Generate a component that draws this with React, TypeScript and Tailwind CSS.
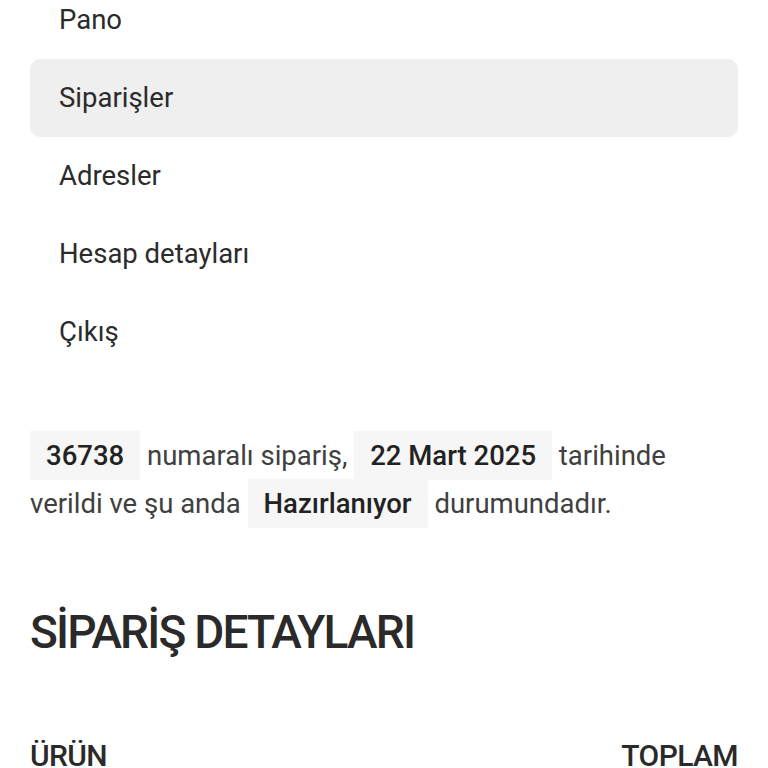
const menu = ["Pano", "Siparişler", "Adresler", "Hesap detayları", "Çıkış"];

function Mark({ children }: { children: React.ReactNode }) {
  return (
    <mark className="bg-[#f6f6f6] text-[#222] font-medium px-4 py-[8px]">{children}</mark>
  );
}

export default function App() {
  return (
    <div
      className="h-[768px] overflow-hidden bg-white text-[#2b2b2b] px-[30px]"
      style={{ fontFamily: "Roboto, 'Liberation Sans', sans-serif" }}
    >
      <nav className="-mt-[19px]">
        <ul>
          {menu.map((item) => (
            <li key={item}>
              <a
                className={
                  "flex items-center h-[78px] pl-[29px] rounded-[10px] text-[27.5px] " +
                  (item === "Siparişler" ? "bg-[#efefef]" : "")
                }
              >
                {item}
              </a>
            </li>
          ))}
        </ul>
      </nav>

      <p className="mt-[61px] text-[27.5px] leading-[48px] text-[#404040]">
        <Mark>36738</Mark> numaralı sipariş, <Mark>22 Mart 2025</Mark> tarihinde verildi ve şu anda{" "}
        <Mark>Hazırlanıyor</Mark> durumundadır.
      </p>

      <h2 className="mt-[74px] text-[46px] leading-[60px] text-[#2a2a2a] font-medium tracking-[-1.8px]">
        SİPARİŞ DETAYLARI
      </h2>

      <div className="mt-[74px] flex justify-between text-[30px] font-medium text-[#2a2a2a] leading-[40px] tracking-[-0.6px]">
        <span>ÜRÜN</span>
        <span>TOPLAM</span>
      </div>
    </div>
  );
}
